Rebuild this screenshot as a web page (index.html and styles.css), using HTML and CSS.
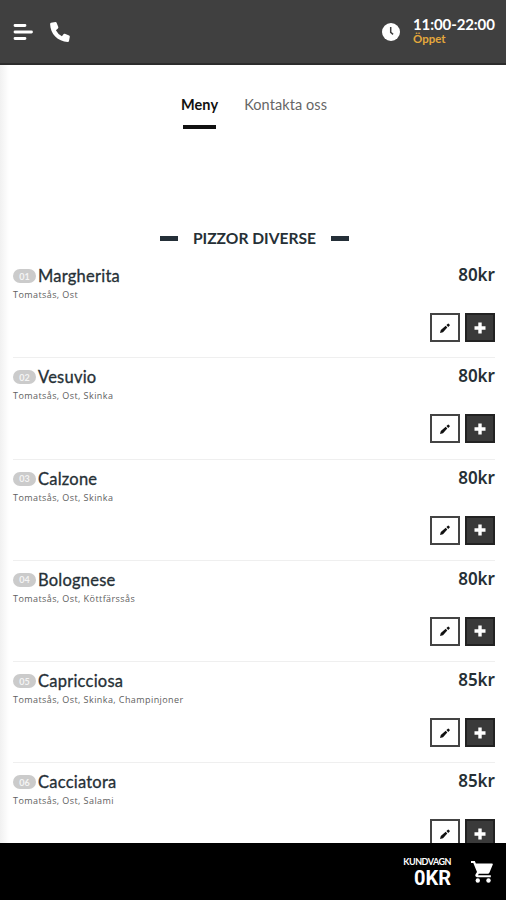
FILE: index.html
```html
<!DOCTYPE html>
<html lang="sv">
<head>
<meta charset="utf-8">
<title>Meny</title>
<link rel="stylesheet" href="styles.css">
</head>
<body>
<svg class="sprite" width="0" height="0">
  <symbol id="pencil" viewBox="0 0 12 12"><path d="M1 11l.8-3 4.900-4.200 1.600 1.600L4 10.200zM7.400 3.100l1.500-1.400q.4-.4.800 0l1 1q.4.400 0 .8L9.200 4.900z"/></symbol>
  <symbol id="plus" viewBox="0 0 12 12"><path d="M4.300.5h3.400v3.800h3.800v3.400H7.700v3.800H4.300V7.700H.5V4.300h3.800z"/></symbol>
</svg>
<div class="app">
  <header class="topbar">
    <svg class="menu-icon" viewBox="0 0 20 18"><path d="M2 2.500h10M2 9h16.500M2 15.500h10"/></svg>
    <svg class="phone-icon" viewBox="0 0 20 20"><path d="M1 0.800L5.500 0q.8 0 1.100.8l1.700 4.300q.2.800-.4 1.300L5.900 8.200q2 4 6 6l1.800-2.100q.5-.5 1.200-.3l4.200 1.800q.8.400.7 1.200l-.8 4.200q-.2.900-1.200.9C7.800 19.500.3 12 .1 2Q.1 1 1 .8z"/></svg>
    <svg class="clock-icon" viewBox="0 0 18 18"><circle cx="9" cy="9" r="9"/><path d="M8.700 4v5.300l2.400 2"/></svg>
    <div class="hours"><span class="time">11:00-22:00</span><span class="status">Öppet</span></div>
  </header>
  <nav class="tabs"><span class="tab active">Meny</span><span class="tab">Kontakta oss</span></nav>
  <h2 class="section-title"><span>PIZZOR DIVERSE</span></h2>
  <main class="list">
    <article class="item"><div class="line"><span class="num">01</span><h3>Margherita</h3><span class="price">80kr</span></div><p>Tomatsås, Ost</p><div class="actions"><button class="edit"><svg><use href="#pencil"/></svg></button><button class="add"><svg><use href="#plus"/></svg></button></div></article>
    <article class="item"><div class="line"><span class="num">02</span><h3>Vesuvio</h3><span class="price">80kr</span></div><p>Tomatsås, Ost, Skinka</p><div class="actions"><button class="edit"><svg><use href="#pencil"/></svg></button><button class="add"><svg><use href="#plus"/></svg></button></div></article>
    <article class="item"><div class="line"><span class="num">03</span><h3>Calzone</h3><span class="price">80kr</span></div><p>Tomatsås, Ost, Skinka</p><div class="actions"><button class="edit"><svg><use href="#pencil"/></svg></button><button class="add"><svg><use href="#plus"/></svg></button></div></article>
    <article class="item"><div class="line"><span class="num">04</span><h3>Bolognese</h3><span class="price">80kr</span></div><p>Tomatsås, Ost, Köttfärssås</p><div class="actions"><button class="edit"><svg><use href="#pencil"/></svg></button><button class="add"><svg><use href="#plus"/></svg></button></div></article>
    <article class="item"><div class="line"><span class="num">05</span><h3>Capricciosa</h3><span class="price">85kr</span></div><p>Tomatsås, Ost, Skinka, Champinjoner</p><div class="actions"><button class="edit"><svg><use href="#pencil"/></svg></button><button class="add"><svg><use href="#plus"/></svg></button></div></article>
    <article class="item"><div class="line"><span class="num">06</span><h3>Cacciatora</h3><span class="price">85kr</span></div><p>Tomatsås, Ost, Salami</p><div class="actions"><button class="edit"><svg><use href="#pencil"/></svg></button><button class="add"><svg><use href="#plus"/></svg></button></div></article>
  </main>
  <footer class="cart">
    <div class="cart-text"><span class="cart-label">KUNDVAGN</span><span class="total">0KR</span></div>
    <svg class="cart-icon" viewBox="0 0 22 22"><path d="M0 0h3.800l1.100 2.500H21q1.200.2.700 1.300l-3.200 7.700q-.6 1.200-1.700 1.200H7.800l-.8 1.500h12.800v2H6q-2.500-.5-1.400-2.900L6 11 2.300 2H0z"/><circle cx="6.800" cy="19.500" r="2.200"/><circle cx="17.500" cy="19.500" r="2.200"/></svg>
  </footer>
</div>
</body>
</html>
```
FILE: styles.css
```css
* { box-sizing: border-box; }
body { margin: 0; font-family: Lato, sans-serif; color: #263036; background: #fff; }
.sprite { display: block; }
.app { display: flex; flex-direction: column; height: 900px; overflow: hidden; background: linear-gradient(90deg, #f1f1f1, #fff 9px); }
.topbar { flex: none; display: flex; align-items: center; height: 65px; padding: 0 11px 0 13px; background: #404040; border-bottom: 2px solid #2c2c2c; color: #fff; }
.menu-icon { width: 20px; height: 18px; margin-top: 1px; fill: none; stroke: #fff; stroke-width: 2.800; stroke-linecap: round; }
.phone-icon { width: 20px; height: 20px; margin-left: 17px; fill: #fff; }
.clock-icon { width: 18px; height: 18px; margin: 0 13px 0 auto; fill: #fff; }
.clock-icon path { fill: none; stroke: #404040; stroke-width: 1.500; }
.hours { display: flex; flex-direction: column; width: 82px; white-space: nowrap; margin-top: -1px; }
.time { font-size: 15px; line-height: 16px; font-weight: 700; letter-spacing: -0.100px; }
.status { font-size: 11.500px; line-height: 14px; font-weight: 700; color: #e5a83c; }
.tabs { flex: none; display: flex; justify-content: center; gap: 26px; height: 154px; padding: 30px 0 0 2px; font-size: 14.500px; line-height: 20px; }
.tab { color: #666; letter-spacing: 0.080px; }
.active { display: flex; flex-direction: column; align-items: center; height: 35px; color: #111; font-weight: 700; }
.active::after { content: ""; width: 33px; height: 4px; margin-top: 10px; background: #111; }
.section-title { flex: none; display: flex; align-items: center; justify-content: center; gap: 15px; height: 38px; margin: 0; padding: 0 0 0 3px; font-size: 15.600px; line-height: 38px; font-weight: 700; white-space: nowrap; }
.section-title::before, .section-title::after { content: ""; width: 18px; height: 5px; background: #242f38; }
.list { flex: 1; min-height: 0; overflow: hidden; padding: 0 11px 0 13px; }
.item { height: 101.300px; border-bottom: 1px solid #efefef; padding-top: 8px; }
.line { display: flex; align-items: center; height: 22px; }
.num { display: flex; align-items: center; justify-content: center; width: 23px; height: 14px; border-radius: 7px; background: #cbcbcb; color: #f4f4f4; font-size: 9px; font-weight: 700; margin-right: 2px; }
h3 { margin: 0; font-size: 16.500px; line-height: 22px; font-weight: 400; letter-spacing: 0.230px; -webkit-text-stroke: 0.300px; }
.price { margin-left: auto; font: 600 17px/20px "Noto Sans", sans-serif; padding-bottom: 2px; }
p { margin: 1px 0 0; height: 14px; font: 9px/14px "Open Sans", sans-serif; letter-spacing: 0.420px; color: #606060; }
.actions { display: flex; justify-content: flex-end; gap: 5px; margin-top: 11px; }
button { display: flex; align-items: center; justify-content: center; width: 30px; height: 29px; padding: 0; border: 2px solid #444; border-radius: 0; background: #fff; }
button svg { width: 12px; height: 12px; fill: #111; }
.add { background: #3a3a3a; border-color: #222; }
.add svg { fill: #fff; }
.cart { flex: none; display: flex; justify-content: flex-end; align-items: center; height: 57px; padding: 0 13px 0 0; background: #000; color: #fff; }
.cart-text { display: flex; flex-direction: column; align-items: flex-end; margin-right: 20px; padding-top: 2px; }
.cart-label { font-size: 9px; line-height: 11px; font-weight: 700; letter-spacing: -0.500px; }
.total { font: 700 20px/22px Roboto, sans-serif; }
.cart-icon { width: 22px; height: 22px; fill: #fff; }
```
